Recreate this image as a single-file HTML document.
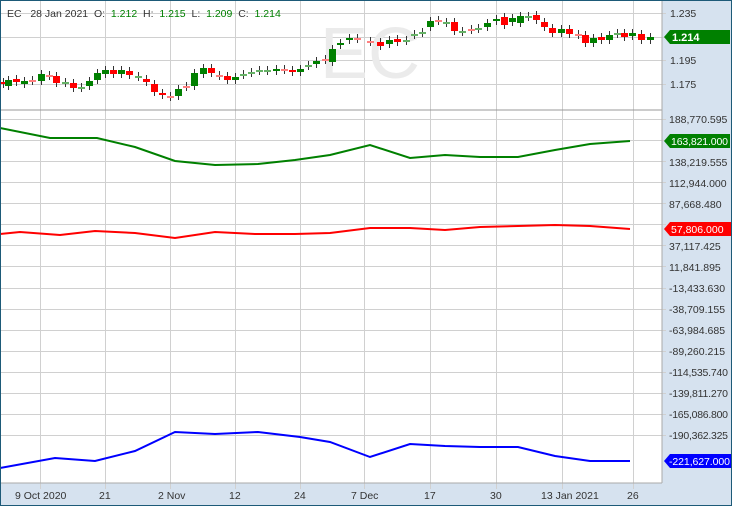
<!DOCTYPE html>
<html><head><meta charset="utf-8"><style>
body{margin:0;width:732px;height:506px;overflow:hidden;background:#fff;font-family:"Liberation Sans",sans-serif}
svg{display:block}
</style></head><body>
<svg id="s" width="732" height="506" xmlns="http://www.w3.org/2000/svg" font-family="Liberation Sans, sans-serif" font-size="11">
<rect x="0" y="0" width="732" height="506" fill="#fff"/>
<rect x="662" y="0" width="70" height="506" fill="#d6e2ef"/>
<rect x="0" y="483" width="732" height="23" fill="#d6e2ef"/>
<g stroke="#d0d0d0" stroke-width="1">
<line x1="40.5" y1="0" x2="40.5" y2="489"/><line x1="105.5" y1="0" x2="105.5" y2="489"/><line x1="170.5" y1="0" x2="170.5" y2="489"/><line x1="235.5" y1="0" x2="235.5" y2="489"/><line x1="300.5" y1="0" x2="300.5" y2="489"/><line x1="364.5" y1="0" x2="364.5" y2="489"/><line x1="430.5" y1="0" x2="430.5" y2="489"/><line x1="496.5" y1="0" x2="496.5" y2="489"/><line x1="562.5" y1="0" x2="562.5" y2="489"/><line x1="633.5" y1="0" x2="633.5" y2="489"/>
<line x1="0" y1="13.5" x2="666" y2="13.5"/><line x1="0" y1="37.5" x2="666" y2="37.5"/><line x1="0" y1="60.5" x2="666" y2="60.5"/><line x1="0" y1="84.5" x2="666" y2="84.5"/>
</g>
<g id="hg" stroke="#d0d0d0"></g>
<line x1="0" y1="110" x2="662" y2="110" stroke="#999"/>
<line x1="662" y1="0" x2="662" y2="483" stroke="#aaa"/>
<line x1="0" y1="483" x2="662" y2="483" stroke="#aaa"/>
<text x="320" y="78" font-size="72" fill="#ebebeb">EC</text>
<text x="7" y="17" font-size="10.5" fill="#333">EC&#160;&#160;&#160;28 Jan 2021&#160;&#160;O:&#160;&#160;<tspan fill="#008000">1.212</tspan>&#160;&#160;H:&#160;&#160;<tspan fill="#008000">1.215</tspan>&#160;&#160;L:&#160;&#160;<tspan fill="#008000">1.209</tspan>&#160;&#160;C:&#160;&#160;<tspan fill="#008000">1.214</tspan></text>
<g id="c"></g>
<polyline fill="none" stroke="#008000" stroke-width="2" points="0,128 50,138 97,138 135,147 175,161 215,165 258,164 295,160 330,155 370,145 410,158 445,155 480,157 518,157 555,150 590,144 630,141"/>
<polyline fill="none" stroke="#ff0000" stroke-width="2" points="0,234 20,232 60,235 95,231 135,233 175,238 215,232 255,234 295,234 330,233 370,228 410,228 445,230 480,227 518,226 555,225 590,226 630,229"/>
<polyline fill="none" stroke="#0000ff" stroke-width="2" points="0,468 55,458 95,461 135,451 175,432 215,434 258,432 300,437 330,442 370,457 410,444 445,446 480,447 518,447 555,456 590,461 630,461"/>
<g fill="#333" font-size="10.5">
<text x="670" y="17">1.235</text><text x="670" y="64">1.195</text><text x="670" y="88">1.175</text>
<text x="669" y="123">188,770.595</text><text x="669" y="166">138,219.555</text><text x="669" y="187">112,944.000</text><text x="669" y="208">87,668.480</text>
<text x="669" y="250">37,117.425</text><text x="669" y="271">11,841.895</text><text x="669" y="292">-13,433.630</text><text x="669" y="313">-38,709.155</text><text x="669" y="334">-63,984.685</text><text x="669" y="355">-89,260.215</text><text x="669" y="376" textLength="59">-114,535.740</text><text x="669" y="397" textLength="59">-139,811.270</text><text x="669" y="418" textLength="59">-165,086.800</text><text x="669" y="439" textLength="59">-190,362.325</text>
<text x="15" y="499">9 Oct 2020</text><text x="99" y="499">21</text><text x="158" y="499">2 Nov</text><text x="229" y="499">12</text><text x="294" y="499">24</text><text x="351" y="499">7 Dec</text><text x="424" y="499">17</text><text x="490" y="499">30</text><text x="541" y="499">13 Jan 2021</text><text x="627" y="499">26</text>
</g>
<polygon points="664,37 670,30 730,30 730,44 670,44" fill="#008000"/><text x="672" y="41" fill="#fff" font-weight="bold">1.214</text>
<polygon points="664,141 670,134 730,134 730,148 670,148" fill="#008000"/><text x="671" y="145" fill="#fff" font-size="10.5" textLength="57">163,821.000</text>
<polygon points="664,229 670,222 732,222 732,236 670,236" fill="#ff0000"/><text x="671" y="233" fill="#fff" font-size="10.5">57,806.000</text>
<polygon points="664,461 670,454 732,454 732,468 670,468" fill="#0000ff"/><text x="669" y="465" fill="#fff" font-size="10.5" textLength="61">-221,627.000</text>
<rect x="0.5" y="0.5" width="731" height="505" fill="none" stroke="#1d5a78"/>
</svg>
<script>
var NS="http://www.w3.org/2000/svg";
var hg=document.getElementById('hg');
for(var i=0;i<16;i++){var y=Math.round(119+i*21.07)+0.5;var l=document.createElementNS(NS,'line');l.setAttribute('x1',0);l.setAttribute('x2',666);l.setAttribute('y1',y);l.setAttribute('y2',y);hg.appendChild(l);}
var d=[[3,'r',82,84],[8,'g',80,86],[16,'r',79,82],[24,'g',81,84],[32,'r',80,81],[41,'g',74,81],[49,'r',75,76],[56,'r',76,83],[65,'g',82,83],[73,'r',83,88],[81,'g',87,88],[89,'g',81,86],[97,'g',73,80],[105,'g',70,74],[113,'r',70,74],[121,'g',70,74],[129,'r',71,75],[138,'g',76,77],[146,'r',79,82],[154,'r',84,92],[162,'r',93,95],[170,'r',96,97],[178,'g',89,96],[186,'r',86,87],[194,'g',73,86],[203,'g',68,74],[211,'r',68,73],[219,'r',75,76],[227,'r',76,80],[235,'g',77,80],[243,'g',74,75],[251,'g',72,73],[259,'g',70,71],[267,'g',70,71],[276,'g',69,71],[284,'r',69,70],[292,'r',70,72],[300,'g',69,72],[308,'g',65,66],[316,'g',61,64],[325,'r',59,60],[332,'g',49,62],[340,'g',43,45],[349,'g',38,40],[357,'r',38,39],[370,'r',41,42],[380,'r',42,46],[389,'g',40,44],[397,'r',39,42],[406,'g',40,41],[414,'g',34,35],[422,'g',32,33],[430,'g',21,27],[438,'r',20,21],[446,'g',22,23],[454,'r',22,31],[462,'g',31,32],[471,'r',29,30],[478,'g',28,29],[487,'g',23,27],[496,'g',19,21],[504,'r',17,25],[512,'g',18,22],[520,'g',16,23],[528,'g',16,17],[536,'r',15,20],[544,'r',22,27],[552,'r',28,33],[561,'g',29,33],[569,'r',29,34],[578,'r',34,35],[585,'r',35,43],[593,'g',38,43],[601,'r',37,40],[609,'g',35,40],[617,'g',33,34],[624,'r',33,37],[632,'g',33,36],[641,'r',34,40],[650,'g',37,40]];
var c=document.getElementById('c');
d.forEach(function(k){var x=k[0],t=k[2],b=k[3];var thin=(b-t)<=1;
var w=document.createElementNS(NS,'line');w.setAttribute('x1',x+0.5);w.setAttribute('x2',x+0.5);w.setAttribute('y1',t-4);w.setAttribute('y2',b+4);w.setAttribute('stroke','#333');c.appendChild(w);
var r=document.createElementNS(NS,'rect');r.setAttribute('x',x-3);r.setAttribute('width',7);r.setAttribute('y',t);r.setAttribute('height',Math.max(2,b-t));
r.setAttribute('fill',k[1]=='g'?(thin?'#66b266':'#008000'):(thin?'#ff8080':'#ff0000'));c.appendChild(r);});
</script>
</body></html>
